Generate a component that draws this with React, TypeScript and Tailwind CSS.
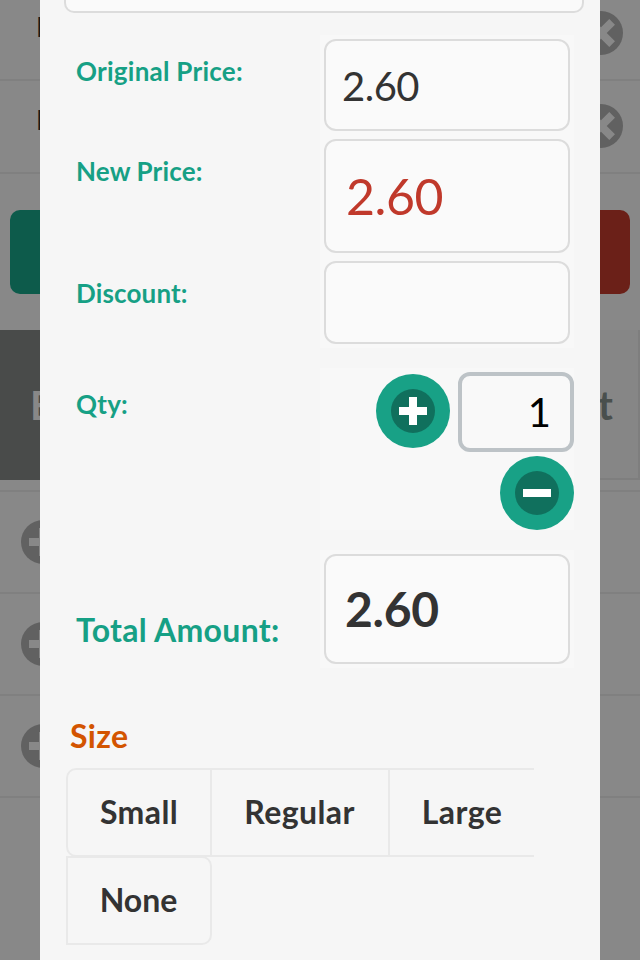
import { useState } from 'react';
import clsx from 'clsx';

const SIZES = ['Small', 'Regular', 'Large', 'None'] as const;
type Size = (typeof SIZES)[number];

const SIZE_STYLES: Record<Size, string> = {
  Small: 'w-[146px] rounded-l-[10px] border-2 tracking-[0.4px]',
  Regular: '-ml-0.5 w-[180px] border-2 pr-px tracking-[0.4px]',
  Large: '-ml-0.5 w-[146px] border-y-2 border-l-2 tracking-[0.4px]',
  None: '-mt-px w-[146px] rounded-r-[10px] border-2 pr-px',
};

function CircleIcon({ kind, disc, mark }: { kind: 'plus' | 'minus' | 'times'; disc: string; mark: string }) {
  return (
    <svg viewBox="0 0 44 44" className="size-11 shrink-0">
      <circle cx="22" cy="22" r="22" fill={disc} />
      {kind === 'times' ? (
        <path d="M8 13.7 13.7 8 22 16.3 30.3 8 36 13.7 27.7 22 36 30.3 30.3 36 22 27.7 13.7 36 8 30.3 16.3 22Z" fill={mark} />
      ) : (
        <g fill={mark}>
          <rect x="8" y="18" width="28" height="8" />
          {kind === 'plus' && <rect x="18" y="8" width="8" height="28" />}
        </g>
      )}
    </svg>
  );
}

function Field({ label, value, labelClass, cellClass, inputClass }: {
  label: string; value: string; labelClass: string; cellClass: string; inputClass: string;
}) {
  return (
    <div className="flex">
      <div className={clsx('w-[280px] pl-9 font-bold whitespace-nowrap text-[#16a085]', labelClass)}>{label}</div>
      <div className={clsx('w-[254px] bg-[#f8f8f8] p-1', cellClass)}>
        <div className={clsx('flex h-full items-center rounded-xl border-2 border-[#dcdcdc] bg-[#fafafa]', inputClass)}>{value}</div>
      </div>
    </div>
  );
}

/** Order screen that sits dimmed behind the dialog */
function OrderPage() {
  return (
    <div className="h-[960px] bg-[#888888]">
      <div className="flex h-[81px] items-start justify-between border-b-2 border-[#808080] pr-[17px] pl-9">
        <span className="mt-[11px] text-[26px] leading-8 text-[#1a1a1a]">I</span>
        <div className="mt-[11px]"><CircleIcon kind="times" disc="#616161" mark="#888888" /></div>
      </div>
      <div className="flex h-[93px] items-start justify-between border-b-2 border-[#808080] pr-[17px] pl-9">
        <span className="mt-[23px] text-[26px] leading-8 text-[#1a1a1a]">I</span>
        <div className="mt-[23px]"><CircleIcon kind="times" disc="#616161" mark="#888888" /></div>
      </div>
      <div className="mt-9 flex justify-between px-2.5">
        <div className="h-[84px] w-[300px] rounded-[10px] bg-[#0d5b4b]" />
        <div className="h-[84px] w-[300px] rounded-[10px] bg-[#6b2018]" />
      </div>
      <div className="mt-9 flex h-[150px] text-[40px] leading-[150px] font-bold">
        <div className="w-1/2 bg-[#494b4a] pl-[30px] text-[#888888]">E</div>
        <div className="w-1/2 border-r-2 border-b-2 border-[#7e7e7e] bg-[#868686] pr-[25px] text-right text-[#494f4d]">t</div>
      </div>
      <div className="mt-2.5 border-t-2 border-[#808080]">
        {[0, 1, 2].map(i => (
          <div key={i} className="flex h-[102px] items-center border-b-2 border-[#808080] pl-[21px]">
            <CircleIcon kind="plus" disc="#616161" mark="#888888" />
          </div>
        ))}
      </div>
    </div>
  );
}

export default function App() {
  const [qty, setQty] = useState(1);
  const [size, setSize] = useState<Size | null>(null);

  return (
    <main className="relative h-[960px] w-[640px] overflow-hidden font-['Lato',sans-serif]">
      <OrderPage />

      <section className="absolute inset-y-0 left-10 w-[560px] bg-[#f6f6f6]">
        <div className="ml-6 h-[13px] w-[520px] rounded-b-[10px] border-2 border-t-0 border-[#dcdcdc] bg-[#fafafa]" />

        <div className="pt-[22px]">
          <Field label="Original Price:" value="2.60" labelClass="pt-5 text-[26px] leading-8 tracking-[0.25px]"
            cellClass="h-[100px]" inputClass="pt-0.5 pl-4 text-[40px] tracking-[-0.5px] text-[#333333]" />
          <Field label="New Price:" value="2.60" labelClass="pt-5 text-[26px] leading-8 tracking-[0.15px]"
            cellClass="h-[122px]" inputClass="pt-px pl-5 text-[50px] tracking-[-0.4px] text-[#c0392b]" />
          <Field label="Discount:" value="" labelClass="pt-5 text-[26px] leading-8 tracking-[0.15px]"
            cellClass="h-[91px]" inputClass="" />
        </div>

        <div className="mt-5 flex">
          <div className="w-[280px] pt-5 pl-9 text-[26px] leading-8 font-bold tracking-[0.25px] text-[#16a085]">Qty:</div>
          <div className="flex h-[162px] w-[254px] flex-wrap content-start justify-end bg-[#f8f8f8] pt-1">
            <button onClick={() => setQty(qty + 1)} className="mt-0.5 mr-2 flex size-[74px] items-center justify-center rounded-full bg-[#18a186]">
              <CircleIcon kind="plus" disc="#10705d" mark="#ffffff" />
            </button>
            <div className="flex h-20 w-[116px] items-center justify-end rounded-xl border-4 border-[#bdc3c7] bg-[#f9f9f9] pr-[19px] text-[40px] text-black">{qty}</div>
            <button onClick={() => setQty(Math.max(1, qty - 1))} className="mt-1 ml-[180px] flex size-[74px] items-center justify-center rounded-full bg-[#18a186]">
              <CircleIcon kind="minus" disc="#10705d" mark="#ffffff" />
            </button>
          </div>
        </div>

        <div className="mt-5">
          <Field label="Total Amount:" value="2.60" labelClass="pt-[60px] text-[32px] leading-10 tracking-[0.3px]"
            cellClass="h-[118px]" inputClass="pl-[19px] text-[48px] font-bold tracking-[-0.3px] text-[#333333]" />
        </div>

        <h2 className="mt-12 pl-[30px] text-[32px] leading-10 font-bold tracking-[0.3px] text-[#d35400]">Size</h2>
        <div className="mt-3 ml-[26px] flex w-[468px] flex-wrap">
          {SIZES.map(s => (
            <button key={s} onClick={() => setSize(s)} aria-pressed={size === s}
              className={clsx('h-[89px] border-[#e9e9e9] pb-px text-[32px] font-bold text-[#333333]', SIZE_STYLES[s])}>
              {s}
            </button>
          ))}
        </div>
      </section>
    </main>
  );
}
